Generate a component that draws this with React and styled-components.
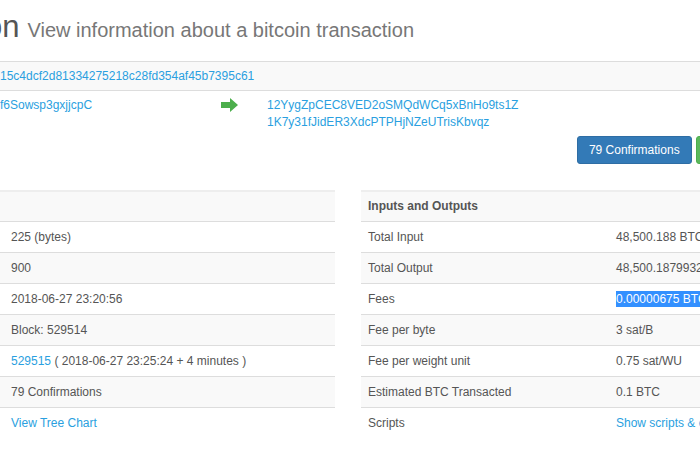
import React from "react";
import styled, { createGlobalStyle } from "styled-components";

const Global = createGlobalStyle`
  html, body { margin: 0; padding: 0; background: #fff; }
  body { font-family: "Liberation Sans", Arial, sans-serif; font-size: 12px; color: #555; }
`;

const Page = styled.div`
  width: 700px;
  height: 466px;
  overflow: hidden;
  background: #fff;
`;

const Header = styled.div`
  display: flex;
  align-items: baseline;
  gap: 8px;
  height: 61px;
  padding-top: 9px;
  box-sizing: border-box;
  margin-left: -15px;
`;

const Title = styled.h1`
  margin: 0;
  font-weight: 400;
  font-size: 31px;
  color: #555;
  line-height: 36px;
`;

const Subtitle = styled.span`
  font-size: 20px;
  color: #777;
`;

const Link = styled.a`
  color: #2a9fe0;
  text-decoration: none;
`;

const HashBar = styled.div`
  height: 28px;
  border-top: 1px solid #ddd;
  border-bottom: 1px solid #ddd;
  background: #f9f9f9;
  display: flex;
  align-items: center;
  width: 760px;
`;

const IORow = styled.div`
  display: grid;
  grid-template-columns: 221px 46px 1fr;
  padding-top: 6px;
  line-height: 17px;
`;

const Arrow = styled.svg`
  width: 18px;
  height: 14px;
  margin-top: 1px;
`;

const Outputs = styled.div`
  display: flex;
  flex-direction: column;
`;

const ButtonBar = styled.div`
  display: flex;
  justify-content: flex-end;
  gap: 4px;
  margin-top: 5px;
  margin-right: -75px;
`;

const Button = styled.span`
  display: inline-flex;
  align-items: center;
  height: 28px;
  box-sizing: border-box;
  padding: 0 11px;
  border-radius: 3px;
  color: #fff;
  font-size: 12px;
  background: ${(p) => (p.$tone === "success" ? "#5cb85c" : "#337ab7")};
  border: 1px solid ${(p) => (p.$tone === "success" ? "#4cae4c" : "#2e6da4")};
`;

const Columns = styled.div`
  display: grid;
  grid-template-columns: 335px 440px;
  column-gap: 26px;
  margin-top: 26px;
`;

const Table = styled.table`
  width: 100%;
  border-collapse: collapse;
  border-top: 2px solid #eee;
  tr:nth-child(odd) td, tr:nth-child(odd) th { background: #f9f9f9; }
`;

const Cell = styled.td`
  height: 31px;
  box-sizing: border-box;
  padding: 0 8px 0 ${(p) => p.$pl || 8}px;
  border-top: 1px solid #ddd;
  text-align: left;
  vertical-align: middle;
  white-space: nowrap;
  width: ${(p) => p.$w || "auto"};
  tr:first-child > & { border-top: none; height: 30px; }
`;

const HeadCell = styled(Cell).attrs({ as: "th" })`
  font-weight: 700;
  color: #555;
`;

const Selected = styled.span`
  background: #3390ff;
  color: #fff;
  padding: 1px 0;
`;

const leftRows = [
  "225 (bytes)",
  "900",
  "2018-06-27 23:20:56",
  "Block: 529514",
  "block",
  "79 Confirmations",
  "tree",
];

const rightRows = [
  ["Total Input", "48,500.188 BTC"],
  ["Total Output", "48,500.18799325 BTC"],
  ["Fees", "fee"],
  ["Fee per byte", "3 sat/B"],
  ["Fee per weight unit", "0.75 sat/WU"],
  ["Estimated BTC Transacted", "0.1 BTC"],
  ["Scripts", "scripts"],
];

function renderLeft(v) {
  if (v === "block")
    return (
      <>
        <Link href="#">529515</Link> ( 2018-06-27 23:25:24 + 4 minutes )
      </>
    );
  if (v === "tree") return <Link href="#">View Tree Chart</Link>;
  return v;
}

function renderRight(v) {
  if (v === "fee") return <Selected>0.00000675 BTC</Selected>;
  if (v === "scripts") return <Link href="#">Show scripts &amp; coinbase</Link>;
  return v;
}

export default function App() {
  return (
    <Page>
      <Global />
      <Header>
        <Title>on</Title>
        <Subtitle>View information about a bitcoin transaction</Subtitle>
      </Header>
      <HashBar>
        <Link href="#">15c4dcf2d81334275218c28fd354af45b7395c61</Link>
      </HashBar>
      <IORow>
        <div>
          <Link href="#">f6Sowsp3gxjjcpC</Link>
        </div>
        <div>
          <Arrow viewBox="0 0 18 14">
            <path d="M0 4 H9 V0 L17 7 L9 14 V10 H0 Z" fill="#4cae4c" />
          </Arrow>
        </div>
        <Outputs>
          <Link href="#">12YygZpCEC8VED2oSMQdWCq5xBnHo9ts1Z</Link>
          <Link href="#">1K7y31fJidER3XdcPTPHjNZeUTrisKbvqz</Link>
        </Outputs>
      </IORow>
      <ButtonBar>
        <Button>79 Confirmations</Button>
        <Button $tone="success">Confirmed</Button>
      </ButtonBar>
      <Columns>
        <Table>
          <tbody>
            <tr>
              <HeadCell $pl={11}>&nbsp;</HeadCell>
            </tr>
            {leftRows.map((r, i) => (
              <tr key={i}>
                <Cell $pl={11}>{renderLeft(r)}</Cell>
              </tr>
            ))}
          </tbody>
        </Table>
        <Table>
          <tbody>
            <tr>
              <HeadCell $w="247px" $pl={7}>Inputs and Outputs</HeadCell>
              <HeadCell>&nbsp;</HeadCell>
            </tr>
            {rightRows.map(([k, v], i) => (
              <tr key={i}>
                <Cell $w="247px" $pl={7}>{k}</Cell>
                <Cell>{renderRight(v)}</Cell>
              </tr>
            ))}
          </tbody>
        </Table>
      </Columns>
    </Page>
  );
}
